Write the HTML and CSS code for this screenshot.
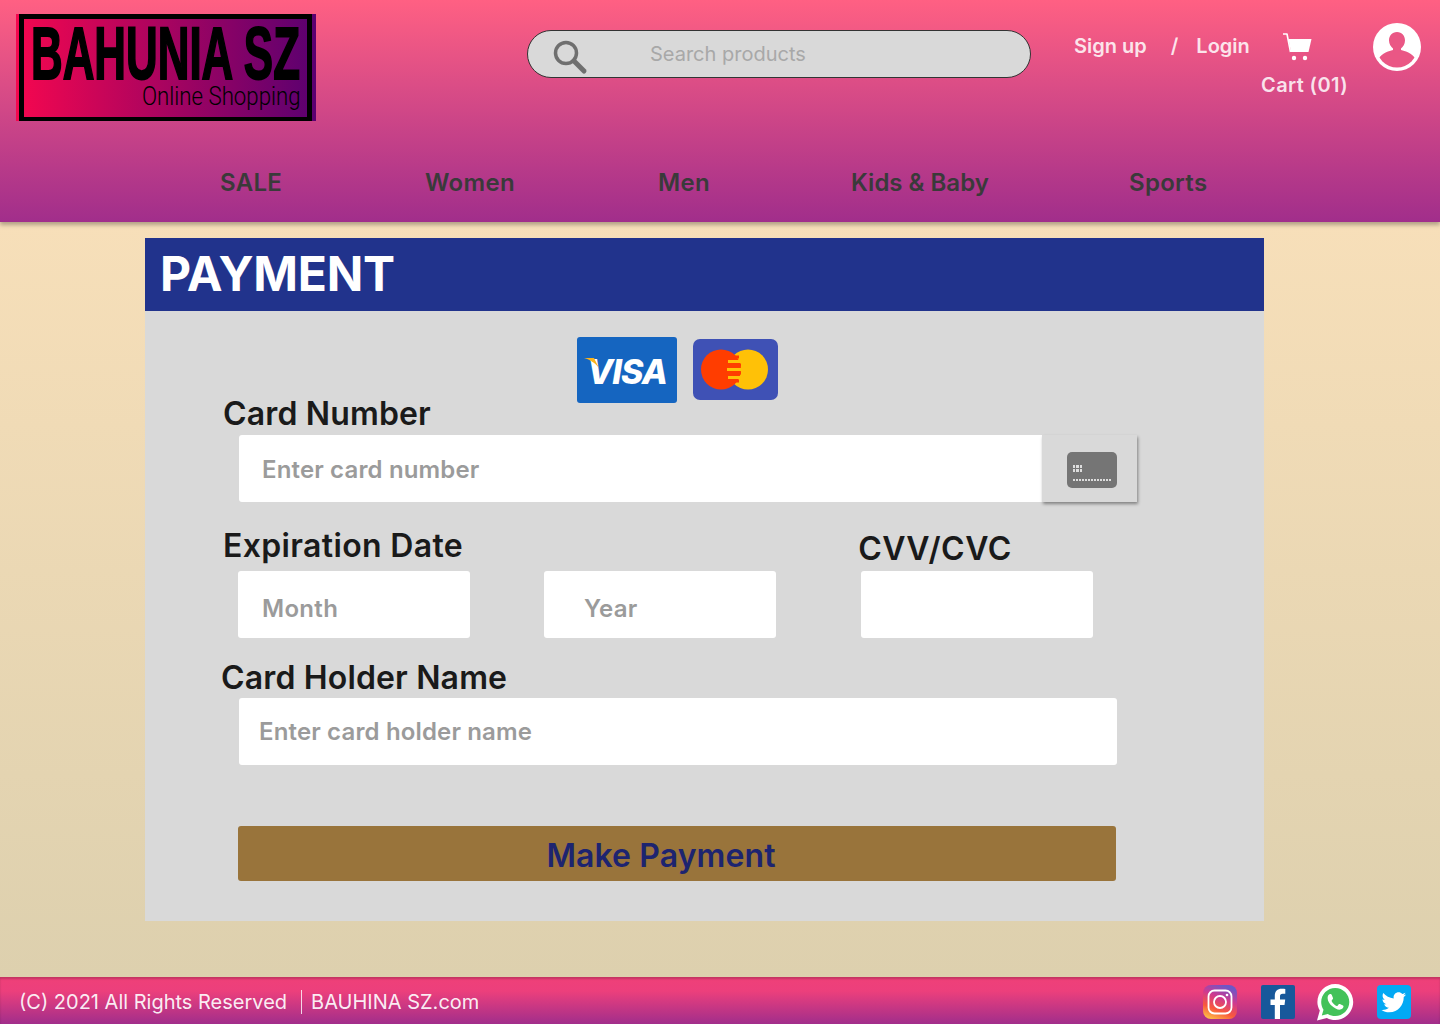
FILE: index.html
```html
<!DOCTYPE html>
<html lang="en">
<head>
    <meta charset="UTF-8">
    <meta name="viewport" content="width=device-width, initial-scale=1.0">
    <title>Bahunia SZ - Payment</title>
    <link rel="stylesheet" href="styles.css">
</head>
<body>
    <header class="site-header">
        <div class="top-row">
            <a class="logo">
                <div class="logo-box">
                    <span class="logo-name">BAHUNIA SZ</span>
                    <span class="logo-sub">Online Shopping</span>
                </div>
            </a>
            <div class="search">
                <svg class="search-icon" width="36" height="36" viewBox="0 0 36 36">
                    <circle cx="14" cy="14" r="10.5" fill="none" stroke="#6f6f6f" stroke-width="3.5"/>
                    <path d="M22 22 L32 32" stroke="#6f6f6f" stroke-width="5" stroke-linecap="round"/>
                </svg>
                <input class="search-input" type="text" placeholder="Search products">
            </div>
            <div class="account">
                <div class="account-links">
                    <a class="signup">Sign up</a>
                    <span class="slash">/</span>
                    <a class="login">Login</a>
                    <svg class="cart-icon" width="30" height="30" viewBox="0 0 30 30">
                        <path d="M1 1 H5 L8.500 19" fill="none" stroke="#fff" stroke-width="1.600" stroke-linejoin="round"/>
                        <path d="M6.500 6 H29.500 L26.500 19 H9 Z" fill="#fff"/>
                        <circle cx="12" cy="25" r="2.200" fill="#fff"/>
                        <circle cx="23" cy="25" r="2.200" fill="#fff"/>
                    </svg>
                </div>
                <a class="cart-count">Cart (01)</a>
            </div>
            <svg class="avatar" width="48" height="48" viewBox="0 0 48 48">
                <defs>
                    <clipPath id="avatar-clip"><circle cx="24" cy="24" r="20.500"/></clipPath>
                </defs>
                <circle cx="24" cy="24" r="24" fill="#fff"/>
                <path clip-path="url(#avatar-clip)" fill="#ea5785" d="M24 9 C19 9 16 13 16 17.500 C16 21 18 24 20 25.500 L20 27 C13 28.500 7 32 4 38 L4 48 L44 48 L44 38 C41 32 35 28.500 28 27 L28 25.500 C30 24 32 21 32 17.500 C32 13 29 9 24 9 Z"/>
            </svg>
        </div>
        <nav class="main-nav">
            <a>SALE</a>
            <a>Women</a>
            <a>Men</a>
            <a class="nav-kids">Kids &amp; Baby</a>
            <a>Sports</a>
        </nav>
    </header>

    <main class="payment">
        <h1 class="payment-title">PAYMENT</h1>
        <form class="payment-form">
            <div class="card-logos">
                <svg width="100" height="66" viewBox="0 0 100 66">
                    <rect width="100" height="66" rx="3" fill="#1565c0"/>
                    <text class="visa-text" x="50" y="47" text-anchor="middle">VISA</text>
                    <path d="M7 21 L17 21 L22 31 C19 27 14 23 7 21 Z" fill="#f9b21c"/>
                </svg>
                <svg class="card-master" width="85" height="61" viewBox="0 0 85 61">
                    <rect width="85" height="61" rx="7" fill="#3f51b5"/>
                    <circle cx="55" cy="30.500" r="20" fill="#ffc107"/>
                    <circle cx="28" cy="30.500" r="20" fill="#ff3d00"/>
                    <path d="M40 18 H46 M40 26 H48 M40 34 H48 M40 42 H46" stroke="#ff3d00" stroke-width="3"/>
                    <path d="M35 22.500 H47.500 M34 30.500 H48 M35 38.500 H47.500" stroke="#ffc107" stroke-width="3"/>
                </svg>
            </div>
            <label class="field-label label-number">Card Number</label>
            <div class="number-row">
                <input class="text-field number-input" type="text" placeholder="Enter card number">
                <div class="card-chip">
                    <svg width="50" height="36" viewBox="0 0 50 36">
                        <rect width="50" height="36" rx="5" fill="#757575"/>
                        <path d="M6 13 H15 V20 H6 Z" fill="#ddd"/>
                        <path d="M8.500 13 V20 M12.500 13 V20 M6 16.500 H15" stroke="#757575" stroke-width="1"/>
                        <path d="M6 28 H45" stroke="#ddd" stroke-width="2" stroke-dasharray="2 1"/>
                    </svg>
                </div>
            </div>
            <div class="date-labels">
                <label class="field-label label-expiry">Expiration Date</label>
                <label class="field-label label-cvv">CVV/CVC</label>
            </div>
            <div class="date-row">
                <input class="text-field month-input" type="text" placeholder="Month">
                <input class="text-field year-input" type="text" placeholder="Year">
                <input class="text-field cvv-input" type="text">
            </div>
            <label class="field-label label-holder">Card Holder Name</label>
            <input class="text-field holder-input" type="text" placeholder="Enter card holder name">
            <button class="pay-button" type="button">Make Payment</button>
        </form>
    </main>

    <footer class="site-footer">
        <div class="copyright">
            <span>(C) 2021 All Rights Reserved</span>
            <span class="site-name">BAUHINA SZ.com</span>
        </div>
        <div class="socials">
            <svg class="social-insta" width="34" height="34" viewBox="0 0 34 34">
                <defs>
                    <linearGradient id="insta-grad" x1="0.2" y1="1" x2="0.6" y2="0">
                        <stop offset="0" stop-color="#fdc046"/>
                        <stop offset="0.3" stop-color="#f9593c"/>
                        <stop offset="0.65" stop-color="#d0398f"/>
                        <stop offset="1" stop-color="#6b57c8"/>
                    </linearGradient>
                </defs>
                <rect width="34" height="34" rx="8" fill="url(#insta-grad)"/>
                <rect x="5.500" y="5.500" width="23" height="23" rx="6" fill="none" stroke="#fff" stroke-width="1.800"/>
                <circle cx="17" cy="17" r="6" fill="none" stroke="#fff" stroke-width="1.800"/>
                <circle cx="24" cy="10" r="1.300" fill="#fff"/>
            </svg>
            <svg class="social-fb" width="34" height="34" viewBox="0 0 34 34">
                <rect width="34" height="34" rx="2" fill="#17589b"/>
                <path d="M19 34 V20 H23.500 L24.200 14.500 H19 V11.500 C19 9.800 19.600 8.800 21.800 8.800 H24.300 V4 C23.500 3.900 22.200 3.800 20.600 3.800 C16.500 3.800 13.800 6.200 13.800 10.800 V14.500 H9.500 V20 H13.800 V34 Z" fill="#fff"/>
            </svg>
            <svg class="social-wa" width="38" height="38" viewBox="0 0 38 38">
                <path d="M1 37.500 L3.800 27.500 C2.200 24.800 1.400 22 1.400 19 C1.400 9.200 9.300 1 19.200 1 C29 1 37.200 9.200 37.200 19 C37.200 28.800 29 37 19.200 37 C16.300 37 13.500 36.300 10.900 34.900 Z" fill="#fff"/>
                <path d="M5.800 32.500 L7.500 26.800 C6 24.400 5.200 21.800 5.200 19 C5.200 11.300 11.500 5 19.200 5 C27 5 33.300 11.300 33.300 19 C33.300 26.700 27 33 19.200 33 C16.600 33 14.100 32.300 11.800 30.900 Z" fill="#43c25a"/>
                <path d="M14.200 11 C13.200 11 11.600 12.400 11.600 14.900 C11.600 18.200 14 21.200 15.700 22.800 C18.200 25.200 21 26.700 23.600 26.700 C25.600 26.700 27.300 25.200 27.500 23.600 C27.500 23 27.400 22.700 27 22.500 L23.900 21 C23.400 20.800 23 20.900 22.700 21.300 L21.600 22.700 C21.300 23 21 23 20.600 22.900 C18.700 22 16.700 20.400 15.700 18.200 C15.500 17.800 15.600 17.500 15.900 17.200 L16.800 16 C17.100 15.700 17.100 15.300 17 14.900 L15.700 11.800 C15.400 11.100 15 11 14.200 11 Z" fill="#fff"/>
            </svg>
            <svg class="social-tw" width="34" height="34" viewBox="0 0 34 34">
                <rect width="34" height="34" rx="4" fill="#03a9f4"/>
                <path d="M29 9.500 C28 10 27.100 10.200 26.200 10.400 C27.200 9.800 28 8.800 28.400 7.700 C27.400 8.300 26.400 8.700 25.300 8.900 C24.300 7.900 23 7.300 21.600 7.300 C18.800 7.300 16.600 9.500 16.600 12.300 C16.600 12.700 16.600 13 16.700 13.400 C12.500 13.200 8.800 11.200 6.300 8.100 C5.900 8.800 5.600 9.700 5.600 10.700 C5.600 12.400 6.500 13.900 7.800 14.800 C7 14.800 6.200 14.500 5.500 14.200 C5.500 16.700 7.200 18.700 9.500 19.200 C8.800 19.400 8 19.400 7.200 19.300 C7.900 21.300 9.700 22.800 11.900 22.800 C9.700 24.500 7 25.300 4.500 25 C6.700 26.400 9.300 27.300 12.200 27.300 C21.600 27.300 26.700 19.500 26.700 12.800 V12.100 C27.600 11.400 28.400 10.500 29 9.500 Z" fill="#fff"/>
            </svg>
        </div>
    </footer>
</body>
</html>
```

FILE: styles.css
```css
* {
    box-sizing: border-box;
}

body {
    margin: 0;
    height: 1024px;
    display: flex;
    flex-direction: column;
    font-family: Inter, 'Liberation Sans', sans-serif;
    background: linear-gradient(180deg, #f7dfb9 222px, #ddd0ae 977px);
    overflow: hidden;
}

/* header */
.site-header {
    height: 222px;
    flex-shrink: 0;
    background: linear-gradient(180deg, #ff6083 0%, #a12e8b 100%);
    box-shadow: 0 3px 4px rgba(0, 0, 0, 0.28);
    position: relative;
    z-index: 1;
}

.top-row {
    display: flex;
    align-items: flex-start;
    height: 150px;
    padding: 14px 0 0 16px;
}

.logo {
    width: 300px;
    height: 107px;
    padding: 0 4px 0 3px;
    background: linear-gradient(90deg, #f5074f 0%, #5a0070 100%);
}

.logo-box {
    height: 100%;
    border: 5px solid #000;
    border-bottom-width: 4px;
}

.logo-name {
    display: block;
    width: 268px;
    font-family: 'Liberation Sans', sans-serif;
    font-weight: 700;
    font-size: 75px;
    line-height: 62px;
    margin-top: 3px;
    margin-left: 7px;
    white-space: nowrap;
    color: #000;
    -webkit-text-stroke: 2px #000;
    transform: scaleX(0.585);
    transform-origin: left center;
}

.logo-sub {
    display: block;
    width: 158px;
    font-family: Roboto, sans-serif;
    font-weight: 300;
    font-size: 25px;
    line-height: 26px;
    margin-left: 118px;
    white-space: nowrap;
    color: #000;
    transform: scaleX(0.89);
    transform-origin: left center;
}

.search {
    width: 504px;
    height: 48px;
    margin: 16px 0 0 211px;
    display: flex;
    align-items: center;
    padding-left: 24px;
    background: #d9d9d9;
    border: 1px solid #333;
    border-radius: 24px;
}

.search-icon {
    margin-top: 5px;
    flex-shrink: 0;
}

.search-input {
    flex: 1;
    min-width: 0;
    margin-left: 62px;
    border: none;
    background: none;
    outline: none;
    padding: 0;
    font: 400 20px Inter, sans-serif;
}

.search-input::placeholder {
    color: #a8a8a8;
    opacity: 1;
}

.account {
    width: 299px;
    margin-left: 43px;
    color: rgba(255, 255, 255, 0.85);
    font-size: 20px;
    font-weight: 600;
}

.account-links {
    display: flex;
    align-items: flex-start;
    height: 32px;
    margin-top: 16px;
}

.account-links a,
.slash {
    line-height: 32px;
}

.slash {
    margin-left: 24px;
}

.login {
    margin-left: 18px;
}

.cart-icon {
    margin-left: 32px;
    margin-top: 3px;
}

.cart-count {
    display: block;
    margin: 7px 0 0 187px;
    line-height: 32px;
    letter-spacing: 0.4px;
}

.avatar {
    position: absolute;
    top: 23px;
    left: 1373px;
}

.main-nav {
    display: grid;
    grid-template-columns: 205px 233px 193px 278px auto;
    padding-left: 220px;
    font-size: 24px;
    font-weight: 600;
    line-height: 32px;
    letter-spacing: 0.3px;
    color: #3a3a3a;
    margin-top: 17px;
}

.nav-kids {
    letter-spacing: 0;
}

/* payment panel */
.payment {
    width: 1119px;
    height: 683px;
    margin: 16px 0 0 145px;
    background: #d9d9d9;
}

.payment-title {
    margin: 0;
    height: 73px;
    padding-left: 15px;
    background: #21338c;
    color: #fff;
    font-size: 48px;
    font-weight: 700;
    line-height: 72px;
    letter-spacing: -0.3px;
}

.payment-form {
    display: flex;
    flex-direction: column;
    align-items: flex-start;
    padding: 26px 0 0 93px;
}

.card-logos {
    display: flex;
    align-items: flex-start;
    gap: 16px;
    margin-left: 339px;
    height: 65px;
}

.card-master {
    margin-top: 2px;
}

.field-label {
    font-size: 32px;
    font-weight: 600;
    line-height: 40px;
    letter-spacing: 0.15px;
    color: #1a1a1a;
}

.label-number {
    margin: -10px 0 0 -15px;
    line-height: 43px;
}

.visa-text {
    font: italic 800 34px Inter, sans-serif;
    fill: #fff;
    letter-spacing: -1px;
}

.number-row {
    display: flex;
    margin-left: 1px;
}

.text-field {
    height: 67px;
    border: none;
    border-radius: 3px;
    background: #fff;
    outline: none;
    padding: 0 0 0 24px;
    font: 600 24px Inter, sans-serif;
    letter-spacing: 0.15px;
}

.text-field::placeholder {
    color: #9b9b9b;
    opacity: 1;
}

.number-input {
    width: 803px;
    padding: 2px 0 0 23px;
    border-radius: 3px 0 0 3px;
}

.card-chip {
    width: 95px;
    height: 67px;
    display: flex;
    align-items: center;
    justify-content: center;
    padding: 2px 0 0 4px;
    background: #d9d9d9;
    box-shadow: 1px 2px 3px rgba(0, 0, 0, 0.4);
}

.date-labels {
    display: flex;
    align-items: flex-end;
    margin: 18px 0 0 -15px;
    height: 46px;
}

.label-expiry {
    letter-spacing: 0.35px;
}

.label-cvv {
    width: 160px;
    margin: 0 0 -3px 395px;
    letter-spacing: 0.45px;
}

.date-row {
    display: flex;
    margin-top: 5px;
}

.month-input,
.year-input,
.cvv-input {
    width: 232px;
    padding-top: 8px;
    letter-spacing: 0.3px;
}

.year-input {
    margin-left: 74px;
    padding-left: 40px;
}

.cvv-input {
    margin-left: 85px;
}

.label-holder {
    margin: 19px 0 0 -17px;
    line-height: 41px;
}

.holder-input {
    width: 878px;
    margin-left: 1px;
    padding-left: 20px;
}

.pay-button {
    width: 878px;
    height: 55px;
    margin-top: 61px;
    padding: 3px 32px 0 0;
    border: none;
    border-radius: 3px;
    background: #99743b;
    color: #1d2470;
    font: 600 32px Inter, sans-serif;
    letter-spacing: 0.1px;
}

/* footer */
.site-footer {
    height: 47px;
    margin-top: auto;
    flex-shrink: 0;
    display: flex;
    align-items: center;
    justify-content: space-between;
    padding: 2px 29px 0 19px;
    background: linear-gradient(180deg, #ef4078 0%, #ec3f7c 30%, #a12e8b 100%);
    box-shadow: inset 0 2px 2px rgba(0, 0, 0, 0.18);
    color: rgba(255, 255, 255, 0.92);
    font-size: 20px;
}

.copyright {
    display: flex;
    align-items: center;
}

.site-name {
    margin-left: 14px;
    padding-left: 9px;
    border-left: 1px solid rgba(255, 255, 255, 0.8);
    line-height: 24px;
}

.socials {
    display: flex;
    align-items: center;
}

.social-fb {
    margin-left: 24px;
}

.social-wa {
    margin-left: 21px;
}

.social-tw {
    margin-left: 23px;
}
```
